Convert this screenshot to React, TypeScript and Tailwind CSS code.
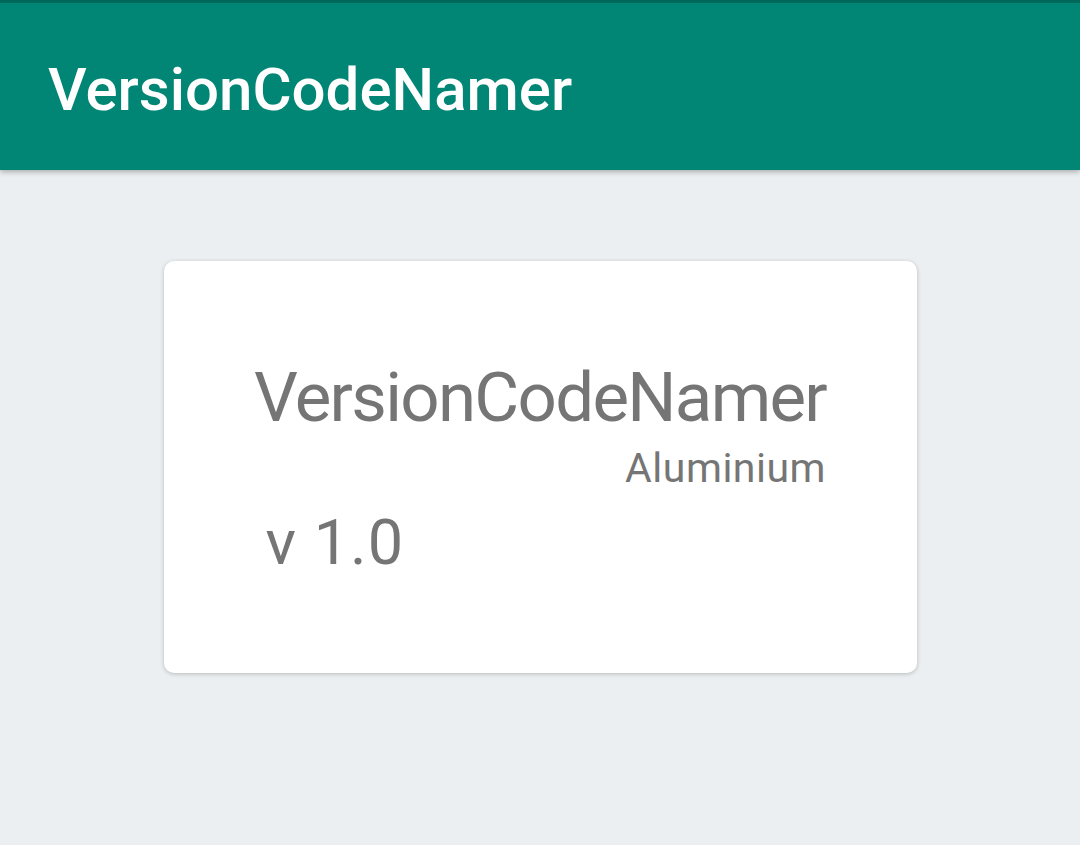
export default function App() {
  return (
    <div
      className="min-h-[845px] w-full bg-[#eceff1]"
      style={{ fontFamily: 'Roboto, "Liberation Sans", sans-serif' }}
    >
      {/* App bar */}
      <header className="relative z-10 h-[170px] border-t-[3px] border-[#00695c] bg-[#018675] pl-[48px] pt-[57px] shadow-[0_2px_5px_rgba(0,0,0,0.28)]">
        <h1 className="text-[60px] font-medium leading-[60px] text-white">VersionCodeNamer</h1>
      </header>

      {/* Card */}
      <div className="flex justify-center pt-[91px]">
        <div className="h-[412px] w-[753px] rounded-[10px] bg-white pt-[102px] shadow-[0_1px_4px_rgba(0,0,0,0.22)]">
          <div className="flex flex-col items-center">
            <div className="inline-flex flex-col items-end text-[#757575]">
              <div className="text-[69px] leading-[69px] tracking-[-1.7px]">VersionCodeNamer</div>
              <div className="mt-[16px] text-[41px] leading-[41px] tracking-[0.5px]">Aluminium</div>
            </div>
          </div>
          <div className="mt-[22px] pl-[102px] text-[63px] leading-[63px] tracking-[1px] text-[#757575]">v 1.0</div>
        </div>
      </div>
    </div>
  );
}
